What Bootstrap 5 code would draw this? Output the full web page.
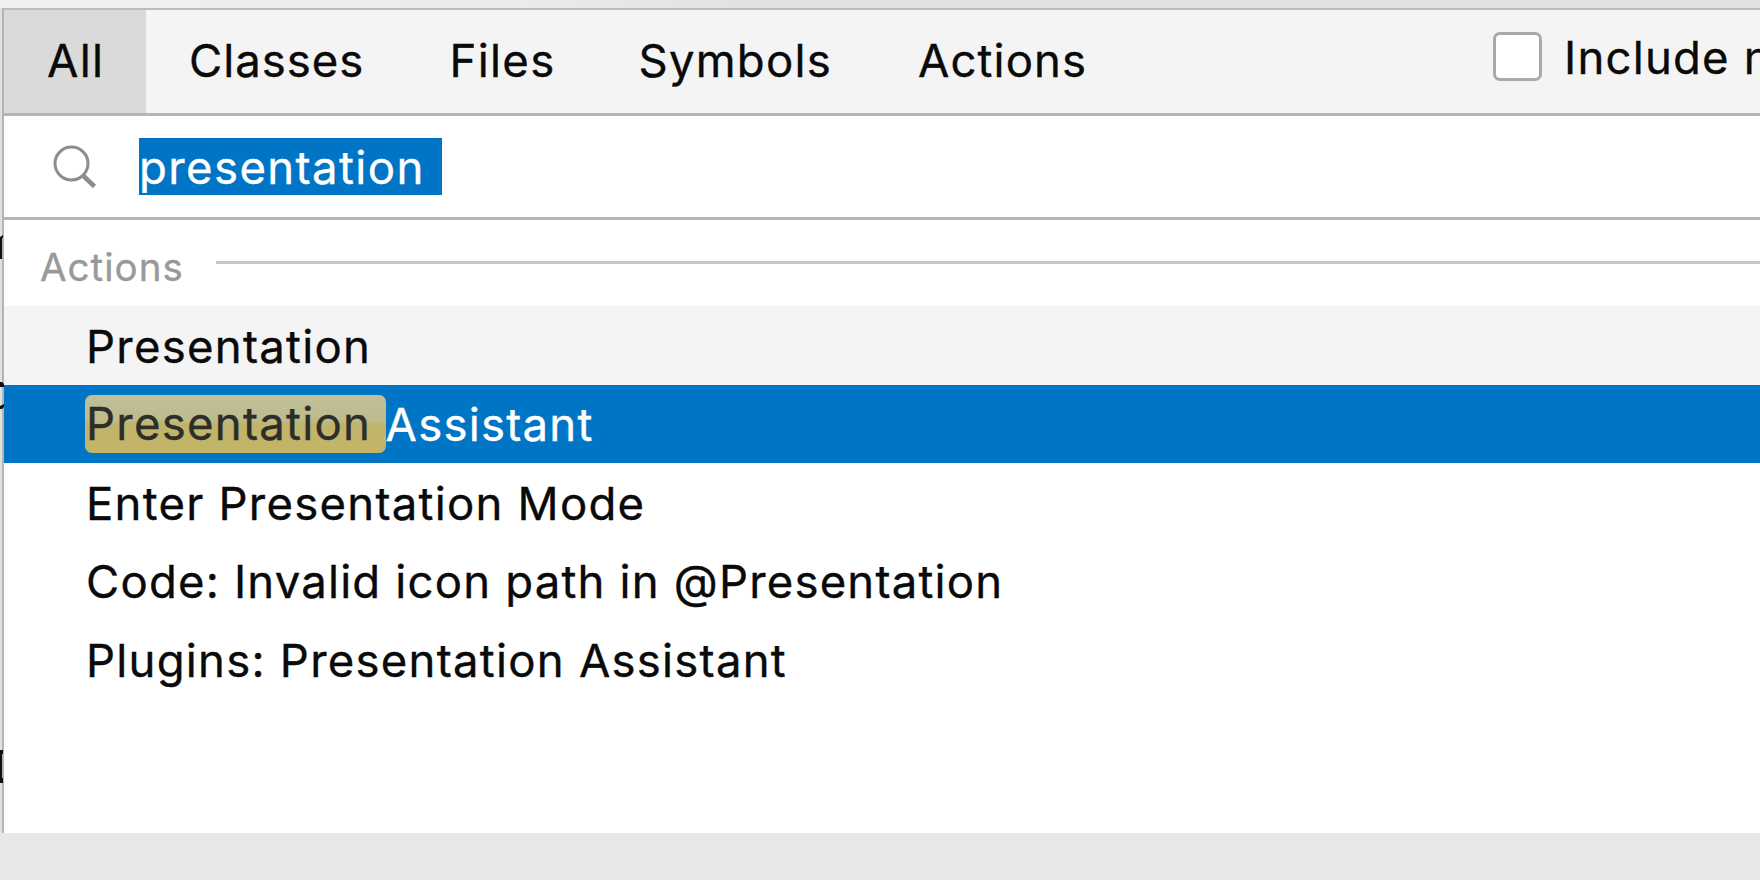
<!DOCTYPE html>
<html lang="en">
<head>
<meta charset="utf-8">
<meta name="viewport" content="width=device-width, initial-scale=1">
<title>Search Everywhere</title>
<link href="https://cdn.jsdelivr.net/npm/bootstrap@5.3.0/dist/css/bootstrap.min.css" rel="stylesheet">
<style>
body{font-family:Inter,"Liberation Sans",sans-serif;font-size:45.5px;line-height:1.2;letter-spacing:1.24px;color:#0a0a0a;background:#e8e8e8;-webkit-text-stroke:.35px currentColor}
.backdrop-strip{height:8px;background:linear-gradient(90deg,#f1f1f1 0,#ececec 500px,#e2e2e2 750px,#e2e2e2 100%)}
.popup-area{height:825px}
.editor-edge{width:4px;background:#e0e0e0}
.popup{border-top:2px solid #bcbcbc;min-width:0}
.tabs-bar{height:106px;background:#f4f4f4;border-bottom:3px solid #b5b5b5}
.tabs-bar .nav-link{padding:0 0 0 42.5px;color:#0a0a0a;border-radius:0}
.tabs-bar .nav-link.active{background:#dadada;padding-left:43px;letter-spacing:1.3px}
.tabs-bar .tab-all{width:142px}
.tabs-bar .tab-classes{width:261px;padding-left:43px;letter-spacing:1px}
.tabs-bar .tab-files{width:190px;letter-spacing:1.3px}
.tabs-bar .tab-symbols{width:279.5px;padding-left:41.5px}
.tabs-bar .tab-actions{padding-left:41.5px;letter-spacing:1.1px}
.modules-check{width:268px;padding-bottom:10px;letter-spacing:1.2px}
.modules-check .form-check-input{width:49px;height:49px;border:3px solid #a9a9a9;border-radius:7px;background:#fff;margin:-1px 0 0 .5px!important}
.modules-check label{margin-left:22.5px;padding-top:3px}
.search-row{height:104px;border-bottom:3px solid #b5b5b5;padding-left:48px}
.search-row svg{margin-top:2px}
.selected-query{margin-left:42px;width:303px;height:57px;line-height:60px;background:#0075c6;color:#fff;letter-spacing:1.4px}
.group-title{height:86px;padding-left:36px;font-size:38.5px;letter-spacing:1.02px;color:#999}
.group-title span{padding-top:8px}
.group-rule{height:3px;margin:-1px 0 0 32.5px;background:#c6c6c6}
.results .list-group-item{height:78.5px;padding:4px 0 0 82px;border:0;border-radius:0;color:#0a0a0a;background:#fff}
.results .row-striped{background:#f4f4f4;letter-spacing:1.26px}
.results .list-group-item.active{background:#0075c6;color:#fff;margin:0}
.results .row-long{letter-spacing:1.18px}
.match{display:inline-block;height:58px;line-height:58px;margin:-4px 0 0 -1px;padding-left:1px;width:300.5px;border-radius:7px;color:#2d2d2a;background:linear-gradient(#bfc09c 0,#bebb8b 44%,#c0b46d 50%,#c3b466 100%);letter-spacing:1.26px}
</style>
</head>
<body class="overflow-hidden">
<div class="backdrop-strip"></div>
<div class="popup-area d-flex">
  <!-- sliver of the editor and the popup's left border -->
  <svg class="editor-edge flex-shrink-0" width="4" height="825" viewBox="0 0 4 825">
    <path d="M2 0h2v825h-2z" fill="#b4b4b4"/>
    <path d="M0 229l3-2v2l-1 2v20H0zM0 374h2l2 2v3H0zM0 398l4-2v3l-2 2H0zM0 742h3v4H2v24h1v5H0z" fill="#111"/>
  </svg>
  <div class="popup flex-grow-1 bg-white overflow-hidden">
    <div class="tabs-bar d-flex justify-content-between">
      <nav class="nav flex-nowrap">
        <a class="nav-link active tab-all d-flex align-items-center">All</a>
        <a class="nav-link tab-classes d-flex align-items-center">Classes</a>
        <a class="nav-link tab-files d-flex align-items-center">Files</a>
        <a class="nav-link tab-symbols d-flex align-items-center">Symbols</a>
        <a class="nav-link tab-actions d-flex align-items-center">Actions</a>
      </nav>
      <div class="modules-check d-flex align-items-center text-nowrap overflow-hidden">
        <input class="form-check-input flex-shrink-0" type="checkbox" id="modules">
        <label for="modules">Include n</label>
      </div>
    </div>
    <div class="search-row d-flex align-items-center">
      <svg width="45" height="45" viewBox="0 0 45 45" fill="none" stroke="#8d8d8d">
        <circle cx="19.5" cy="18.5" r="16.5" stroke-width="3"/>
        <path d="M30.5 30L42.5 41.5" stroke-width="4.6"/>
      </svg>
      <div class="selected-query text-nowrap">presentation</div>
    </div>
    <div class="group-title d-flex align-items-center">
      <span>Actions</span>
      <div class="group-rule flex-grow-1"></div>
    </div>
    <div class="results list-group list-group-flush text-nowrap">
      <div class="list-group-item row-striped d-flex align-items-center">Presentation</div>
      <div class="list-group-item active d-flex align-items-center"><span class="match">Presentation</span><span>Assistant</span></div>
      <div class="list-group-item d-flex align-items-center">Enter Presentation Mode</div>
      <div class="list-group-item row-long d-flex align-items-center">Code: Invalid icon path in @Presentation</div>
      <div class="list-group-item d-flex align-items-center">Plugins: Presentation Assistant</div>
    </div>
  </div>
</div>
<script src="https://cdn.jsdelivr.net/npm/bootstrap@5.3.0/dist/js/bootstrap.bundle.min.js"></script>
</body>
</html>
